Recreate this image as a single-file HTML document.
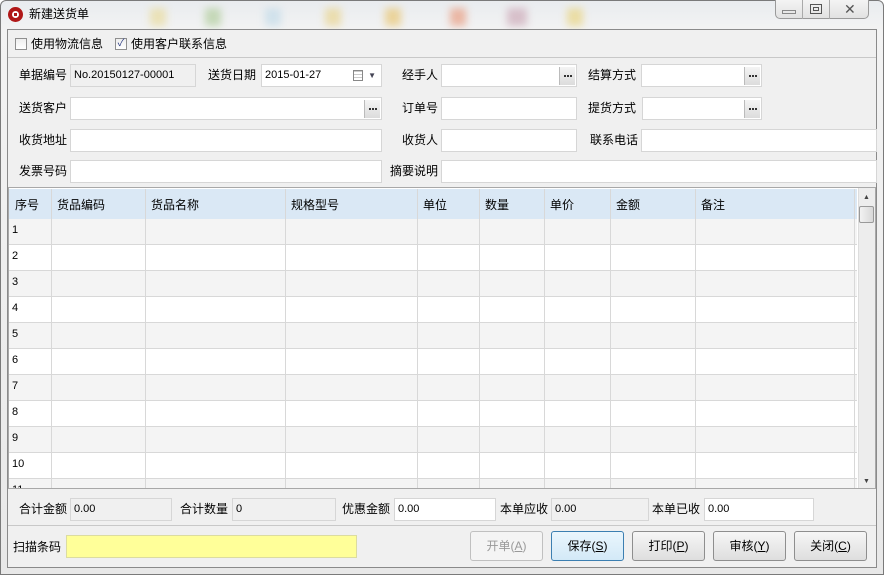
<!DOCTYPE html>
<html><head><meta charset="utf-8"><style>
*{box-sizing:border-box;margin:0;padding:0}
body{width:884px;height:575px;overflow:hidden;background:#fff;font-family:"Liberation Sans","Noto Sans CJK SC",sans-serif;font-size:12px;color:#000;position:relative}
.a{position:absolute}
.lbl{position:absolute;font-size:12px;line-height:14px;white-space:nowrap}
.in{position:absolute;background:#fff;border:1px solid #d6d6d6;height:23px;font-size:11px;line-height:21px;padding-left:3px}
.ro{background:#f0f0f0}
.dots{position:absolute;right:1px;top:2px;width:16px;height:18px;background:linear-gradient(#f4f4f4,#dcdcdc);border-left:1px solid #bbb}
.dots:after{content:"";position:absolute;left:4px;top:8px;width:8px;height:2px;background:repeating-linear-gradient(90deg,#333 0 2px,transparent 2px 3px)}
.btn{position:absolute;top:531px;height:30px;width:73px;border:1px solid #8e8e8e;border-radius:3px;background:linear-gradient(#f6f6f6,#dedede);text-align:center;line-height:28px;font-size:12px}
.cb{position:absolute;width:12px;height:12px;border:1px solid #8f8f8f;background:linear-gradient(#eee,#fff)}
</style></head><body>
<div class="a" style="left:0;top:0;width:884px;height:575px;background:linear-gradient(#e9ecef,#f3f3f3 30px,#e8e8e8);border:1px solid #7a7a7a;border-radius:6px 6px 0 0"></div>
<div class="a" style="left:150px;top:8px;width:16px;height:18px;background:#e8d890;filter:blur(4px);opacity:.6"></div>
<div class="a" style="left:205px;top:8px;width:16px;height:18px;background:#a8c890;filter:blur(4px);opacity:.6"></div>
<div class="a" style="left:265px;top:8px;width:16px;height:18px;background:#bcd8e8;filter:blur(4px);opacity:.6"></div>
<div class="a" style="left:325px;top:8px;width:16px;height:18px;background:#e8d080;filter:blur(4px);opacity:.6"></div>
<div class="a" style="left:385px;top:8px;width:16px;height:18px;background:#e8c060;filter:blur(4px);opacity:.6"></div>
<div class="a" style="left:450px;top:8px;width:16px;height:18px;background:#e89070;filter:blur(4px);opacity:.6"></div>
<div class="a" style="left:507px;top:8px;width:20px;height:18px;background:#c8a0b0;filter:blur(4px);opacity:.6"></div>
<div class="a" style="left:567px;top:8px;width:16px;height:18px;background:#e8d070;filter:blur(4px);opacity:.6"></div>
<div class="a" style="left:8px;top:7px;width:15px;height:15px;border-radius:50%;background:#b01818"></div>
<div class="a" style="left:12px;top:11px;width:7px;height:7px;border-radius:50%;background:#fff"></div>
<div class="a" style="left:14px;top:13px;width:3px;height:3px;background:#b01818"></div>
<div class="lbl" style="left:29px;top:7px">新建送货单</div>
<div class="a" style="left:775px;top:0;width:94px;height:19px;border:1px solid #9a9a9a;border-top:none;border-radius:0 0 5px 5px;background:linear-gradient(#f4f4f4,#e2e2e2)"></div>
<div class="a" style="left:802px;top:0;width:1px;height:19px;background:#aaa"></div>
<div class="a" style="left:829px;top:0;width:1px;height:19px;background:#aaa"></div>
<div class="a" style="left:782px;top:10px;width:14px;height:4px;border:1px solid #888"></div>
<div class="a" style="left:810px;top:4px;width:12px;height:10px;border:1px solid #555"></div>
<div class="a" style="left:813px;top:7px;width:6px;height:4px;border:1px solid #555"></div>
<div class="lbl" style="left:844px;top:2px;font-size:14px;color:#555">✕</div>
<div class="a" style="left:7px;top:29px;width:870px;height:539px;background:#f0f0f0;border:1px solid #8a8a8a"></div>
<div class="a" style="left:8px;top:57px;width:868px;height:1px;background:#c8c8c8"></div>
<div class="cb" style="left:15px;top:38px"></div>
<div class="lbl" style="left:31px;top:37px">使用物流信息</div>
<div class="cb" style="left:115px;top:38px;font-size:10px;line-height:10px;text-align:center;color:#2a3a80">✓</div>
<div class="lbl" style="left:131px;top:37px">使用客户联系信息</div>
<div class="lbl" style="left:19px;top:68px">单据编号</div>
<div class="in ro" style="left:70px;top:64px;width:126px">No.20150127-00001</div>
<div class="lbl" style="left:208px;top:68px">送货日期</div>
<div class="in" style="left:261px;top:64px;width:121px">2015-01-27<span class="a" style="right:18px;top:5px;width:10px;height:11px;border:1px solid #888;background:repeating-linear-gradient(#ccc 0 1px,#fff 1px 3px)"></span><span class="a" style="right:5px;top:0;font-size:8px;color:#445">▼</span></div>
<div class="lbl" style="left:402px;top:68px">经手人</div>
<div class="in" style="left:441px;top:64px;width:136px"><div class="dots"></div></div>
<div class="lbl" style="left:588px;top:68px">结算方式</div>
<div class="in" style="left:641px;top:64px;width:121px"><div class="dots"></div></div>
<div class="lbl" style="left:19px;top:101px">送货客户</div>
<div class="in" style="left:70px;top:97px;width:312px"><div class="dots"></div></div>
<div class="lbl" style="left:402px;top:101px">订单号</div>
<div class="in" style="left:441px;top:97px;width:136px"></div>
<div class="lbl" style="left:588px;top:101px">提货方式</div>
<div class="in" style="left:642px;top:97px;width:120px"><div class="dots"></div></div>
<div class="lbl" style="left:19px;top:133px">收货地址</div>
<div class="in" style="left:70px;top:129px;width:312px"></div>
<div class="lbl" style="left:402px;top:133px">收货人</div>
<div class="in" style="left:441px;top:129px;width:136px"></div>
<div class="lbl" style="left:590px;top:133px">联系电话</div>
<div class="in" style="left:641px;top:129px;width:236px"></div>
<div class="lbl" style="left:19px;top:164px">发票号码</div>
<div class="in" style="left:70px;top:160px;width:312px"></div>
<div class="lbl" style="left:390px;top:164px">摘要说明</div>
<div class="in" style="left:441px;top:160px;width:436px"></div>
<div class="a" style="left:8px;top:187px;width:868px;height:302px;border:1px solid #a8a8a8;background:#fff;overflow:hidden">
 <div class="a" style="left:0;top:1px;width:848px;height:31px;background:#dae8f5;border-bottom:1px solid #c8d4e0"></div>
 <div id="rows"></div>
</div>
<script>
var g=document.getElementById('rows'),cols=[42,136,276,408,470,535,601,686,845],h='';
var heads=['序号','货品编码','货品名称','规格型号','单位','数量','单价','金额','备注'],hx=[6,48,142,282,414,476,541,607,692];
for(var i=0;i<11;i++){var t=31+i*26;h+='<div class="a" style="left:0;top:'+t+'px;width:848px;height:26px;background:'+(i%2?'#fff':'#f4f4f4')+';border-bottom:1px solid #d8d8d8"></div><div class="lbl" style="left:3px;top:'+(t+4)+'px;font-size:11px">'+(i+1)+'</div>';}
for(var j=0;j<cols.length;j++)h+='<div class="a" style="left:'+cols[j]+'px;top:1px;width:1px;height:300px;background:#d8d8d8"></div>';
for(var j=0;j<heads.length;j++)h+='<div class="lbl" style="left:'+hx[j]+'px;top:10px">'+heads[j]+'</div>';
h+='<div class="a" style="left:849px;top:0;width:18px;height:300px;background:#ededed;border-left:1px solid #ddd"></div><div class="lbl" style="left:854px;top:3px;font-size:7px;color:#444">▲</div><div class="lbl" style="left:854px;top:287px;font-size:7px;color:#444">▼</div><div class="a" style="left:850px;top:18px;width:15px;height:17px;border:1px solid #999;border-radius:2px;background:linear-gradient(90deg,#f2f2f2,#d8d8d8)"></div>';
g.innerHTML=h;
</script>
<div class="lbl" style="left:19px;top:502px">合计金额</div>
<div class="in ro" style="left:70px;top:498px;width:102px">0.00</div>
<div class="lbl" style="left:180px;top:502px">合计数量</div>
<div class="in ro" style="left:232px;top:498px;width:104px">0</div>
<div class="lbl" style="left:342px;top:502px">优惠金额</div>
<div class="in" style="left:394px;top:498px;width:102px">0.00</div>
<div class="lbl" style="left:500px;top:502px">本单应收</div>
<div class="in ro" style="left:551px;top:498px;width:98px">0.00</div>
<div class="lbl" style="left:652px;top:502px">本单已收</div>
<div class="in" style="left:704px;top:498px;width:110px">0.00</div>
<div class="a" style="left:8px;top:525px;width:868px;height:1px;background:#c8c8c8"></div>
<div class="lbl" style="left:13px;top:540px">扫描条码</div>
<div class="in" style="left:66px;top:535px;width:291px;background:#ffff99;border-color:#dcdca0"></div>
<div class="btn" style="left:470px;color:#999;border-color:#c0c0c0;background:#f4f4f4">开单(<u>A</u>)</div>
<div class="btn" style="left:551px;border-color:#3c7fb1;background:linear-gradient(#eaf6fd,#d3e9f7)">保存(<u>S</u>)</div>
<div class="btn" style="left:632px">打印(<u>P</u>)</div>
<div class="btn" style="left:713px">审核(<u>Y</u>)</div>
<div class="btn" style="left:794px">关闭(<u>C</u>)</div>
</body></html>
